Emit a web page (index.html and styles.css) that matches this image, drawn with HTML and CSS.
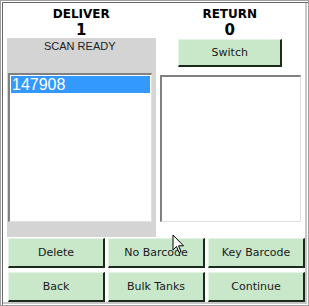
FILE: index.html
```html
<!DOCTYPE html>
<html>
<head>
<meta charset="utf-8">
<link rel="stylesheet" href="styles.css">
</head>
<body>
<div class="frame">
  <div class="cols">
    <div class="col">
      <div class="head">
        <div class="title">DELIVER</div>
        <div class="count">1</div>
      </div>
      <div class="panel">
        <div class="status">SCAN READY</div>
        <div class="list left">
          <div class="item sel">147908</div>
        </div>
      </div>
    </div>
    <div class="col">
      <div class="head">
        <div class="title">RETURN</div>
        <div class="count">0</div>
      </div>
      <div class="rbody">
        <div class="switchrow"><button class="btn switch">Switch</button></div>
        <div class="list right"></div>
      </div>
    </div>
  </div>
  <div class="buttons">
    <button class="btn">Delete</button>
    <button class="btn">No Barcode</button>
    <button class="btn">Key Barcode</button>
    <button class="btn">Back</button>
    <button class="btn">Bulk Tanks</button>
    <button class="btn">Continue</button>
  </div>
  <svg class="cursor" width="14" height="20" viewBox="0 0 14 20"><path d="M1 1 L1 16 L4.5 12.5 L7 18.5 L9 17.5 L6.5 11.8 L11.5 11.8 Z" fill="#fff" stroke="#000" stroke-width="1"/></svg>
</div>
</body>
</html>
```
FILE: styles.css
```css
html, body { margin: 0; padding: 0; background: #fff; }
body { width: 309px; height: 306px; overflow: hidden; font-family: "DejaVu Sans", sans-serif; }
.frame {
  position: relative;
  box-sizing: border-box;
  width: 309px; height: 306px;
  border: 1px solid #a0a0a0;
  box-shadow: inset 1px 1px 0 #fff, inset 2px 2px 0 #696969, inset -1px -1px 0 #fff, inset -3px -3px 0 #c8c8c8;
  padding: 0 4px 0 6px;
  display: flex; flex-direction: column;
}
.cols { display: flex; height: 236px; }
.col { width: 149px; display: flex; flex-direction: column; }
.head { height: 37px; text-align: center; padding-top: 6px; box-sizing: border-box; }
.title { font-weight: bold; font-size: 12px; line-height: 15px; color: #000; }
.count { font-weight: bold; font-size: 15px; line-height: 16px; color: #000; }
.panel { flex: 1; background: #d4d4d4; display: flex; flex-direction: column; padding: 0 4px 15px 1px; }
.status { font-family: "Liberation Sans", sans-serif; font-size: 11px; text-align: center; color: #222; height: 35px; line-height: 16px; }
.list {
  background: #fff;
  border-top: 2px solid #808080; border-left: 2px solid #808080;
  border-right: 1px solid #e0e0e0; border-bottom: 1px solid #e0e0e0;
  box-sizing: border-box;
}
.left { flex: 1; padding: 1px 1px; }
.item { font-family: "Liberation Sans", sans-serif; font-size: 16px; line-height: 17px; color: #fff; padding-left: 1px; }
.sel { background: #3399ff; }
.rbody { flex: 1; display: flex; flex-direction: column; padding: 0 3px 15px 4px; }
.switchrow { display: flex; justify-content: center; height: 37px; padding-top: 1px; box-sizing: border-box; }
.btn {
  font-family: "DejaVu Sans", sans-serif; font-size: 11px; color: #1a1a1a;
  background: #c9e7c9;
  border: 0; border-top: 1px solid #e4f3e4; border-left: 1px solid #e4f3e4;
  border-right: 2px solid #1c2a1c; border-bottom: 2px solid #1c2a1c;
  padding: 0; margin: 0; cursor: default;
}
.switch { width: 104px; height: 28px; }
.right { flex: 1; }
.buttons {
  display: grid; grid-template-columns: 97px 97px 97px; column-gap: 3px; row-gap: 4px;
  grid-auto-rows: 30px; margin-top: 1px; padding-left: 1px;
}
.cursor { position: absolute; left: 171px; top: 233px; }
```
